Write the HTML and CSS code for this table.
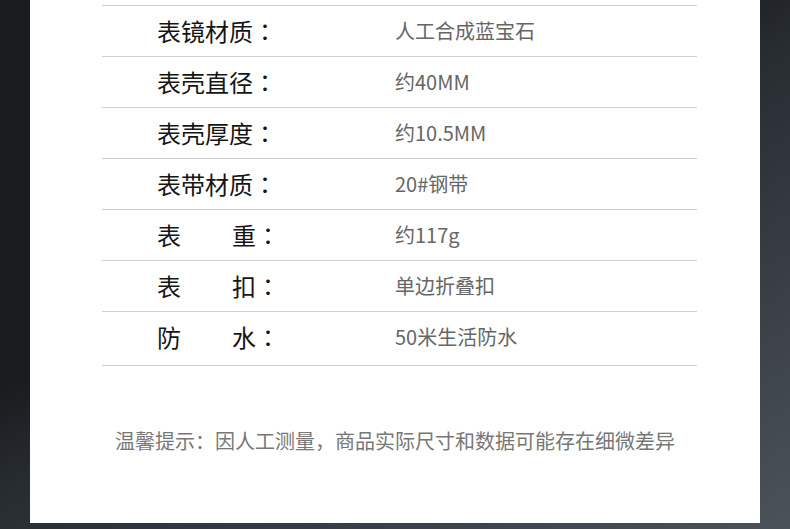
FILE: index.html
```html
<!DOCTYPE html>
<html lang="zh-CN">
<head>
  <meta charset="UTF-8">
  <link rel="stylesheet" href="styles.css">
</head>
<body>
<div class="page">
    <div class="sheet">
        <div class="specs">
            <div class="specRow">
                <div class="specName"><span class="nameText">表镜材质</span><span class="colon">：</span></div>
                <div class="specValue">人工合成蓝宝石</div>
            </div>
            <div class="specRow">
                <div class="specName"><span class="nameText">表壳直径</span><span class="colon">：</span></div>
                <div class="specValue">约40MM</div>
            </div>
            <div class="specRow">
                <div class="specName"><span class="nameText">表壳厚度</span><span class="colon">：</span></div>
                <div class="specValue">约10.5MM</div>
            </div>
            <div class="specRow">
                <div class="specName"><span class="nameText">表带材质</span><span class="colon">：</span></div>
                <div class="specValue">20#钢带</div>
            </div>
            <div class="specRow">
                <div class="specName"><span class="nameText short">表重</span><span class="colon">：</span></div>
                <div class="specValue">约117g</div>
            </div>
            <div class="specRow">
                <div class="specName"><span class="nameText short">表扣</span><span class="colon">：</span></div>
                <div class="specValue">单边折叠扣</div>
            </div>
            <div class="specRow last">
                <div class="specName"><span class="nameText short">防水</span><span class="colon">：</span></div>
                <div class="specValue">50米生活防水</div>
            </div>
        </div>
        <p class="notice">温馨提示：因人工测量，商品实际尺寸和数据可能存在细微差异</p>
    </div>
</div>
</body>
</html>
```

FILE: styles.css
```css
body {
    margin: 0;
    padding: 0;
    font-family: "Noto Sans CJK SC", "Noto Sans", sans-serif;
}
.page {
    height: 529px;
    overflow: hidden;
    background: linear-gradient(150deg, #1a1c1f 40%, #272c31 50%, #4c525a 100%);
}
.sheet {
    margin-left: 30px;
    width: 730px;
    height: 523px;
    background-color: #fff;
    padding-top: 5px;
    box-sizing: border-box;
}
.specs {
    margin-left: 72px;
    width: 595px;
    border-top: 1px solid #cfcfcf;
}
.specRow {
    display: grid;
    grid-template-columns: 238px 1fr;
    align-items: center;
    height: 50px;
    padding-left: 55px;
    border-bottom: 1px solid #cfcfcf;
}
.specRow.last {
    height: 50px;
    padding-bottom: 3px;
}
.specName {
    display: flex;
    align-items: center;
    font-size: 24px;
    line-height: 30px;
    color: #151515;
}
.nameText {
    display: inline-block;
    width: 96px;
    text-align: justify;
    text-align-last: justify;
}
.nameText.short {
    width: 99px;
}
.colon {
    width: 24px;
    text-align: center;
    font-family: "Noto Sans CJK JP", sans-serif;
}
.nameText.short + .colon {
    width: 21px;
}
.specValue {
    font-size: 20px;
    color: #666;
    margin-top: -2px;
}
.notice {
    margin: 60px 0 0;
    font-size: 20px;
    line-height: 30px;
    color: #777;
    text-align: center;
}
```
